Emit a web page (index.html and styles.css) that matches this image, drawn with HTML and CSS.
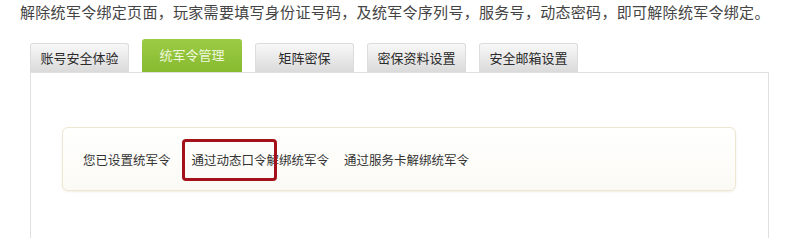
FILE: index.html
```html
<!DOCTYPE html>
<html lang="zh-CN">
<head>
  <meta charset="UTF-8">
  <title>统军令管理</title>
  <link rel="stylesheet" href="styles.css">
</head>
<body>
  <p class="intro">解除统军令绑定页面，玩家需要填写身份证号码，及统军令序列号，服务号，动态密码，即可解除统军令绑定。</p>

  <div class="tabs">
    <div class="tab">账号安全体验</div>
    <div class="tab active">统军令管理</div>
    <div class="tab">矩阵密保</div>
    <div class="tab">密保资料设置</div>
    <div class="tab">安全邮箱设置</div>
  </div>

  <div class="panel">
    <div class="notice">
      <span class="status">您已设置统军令</span>
      <a class="link first" href="#">通过动态口令解绑统军令</a>
      <a class="link" href="#">通过服务卡解绑统军令</a>
      <!-- annotation box -->
      <div class="mark"></div>
    </div>
  </div>
</body>
</html>
```

FILE: styles.css
```css
body {
  margin: 0;
  background: #fff;
  font-family: "Noto Sans CJK SC", "Liberation Sans", sans-serif;
  color: #333;
}
.intro {
  margin: 0;
  padding: 2px 0 0 20px;
  font-size: 15px;
  line-height: 20px;
  color: #444;
  letter-spacing: 0.3px;
  white-space: nowrap;
}
.tabs {
  display: flex;
  align-items: flex-end;
  gap: 13px;
  margin: 17px 0 0 30px;
}
.tab {
  width: 97px;
  height: 28px;
  line-height: 28px;
  text-align: center;
  font-size: 13px;
  color: #2a2a2a;
  border: 1px solid #dcdcdc;
  border-bottom: none;
  border-radius: 3px 3px 0 0;
  background: linear-gradient(#f8f8f8, #dadada);
}
.tab.active {
  width: 100px;
  height: 33px;
  line-height: 31px;
  border: none;
  color: #eef7dc;
  background: linear-gradient(#9bcb45, #88bb30);
}
.panel {
  margin-left: 30px;
  width: 739px;
  height: 166px;
  border: 1px solid #e0e0e0;
  border-bottom: none;
  box-sizing: border-box;
  padding: 54px 32px 0 31px;
}
.notice {
  position: relative;
  height: 64px;
  display: flex;
  align-items: center;
  padding-left: 20px;
  font-size: 12.5px;
  border: 1px solid #efe6d2;
  border-radius: 6px;
  background: linear-gradient(#fffffe, #fbfaf5);
  box-shadow: 0 1px 2px rgba(200, 190, 160, 0.25);
  box-sizing: border-box;
}
.status {
  margin-right: 21px;
}
.link {
  color: #333;
  text-decoration: none;
}
.link.first {
  margin-right: 15px;
}
.mark {
  position: absolute;
  left: 119px;
  top: 11px;
  width: 95px;
  height: 42px;
  border: 3px solid #a3111a;
  border-radius: 4px;
  box-sizing: border-box;
}
```
